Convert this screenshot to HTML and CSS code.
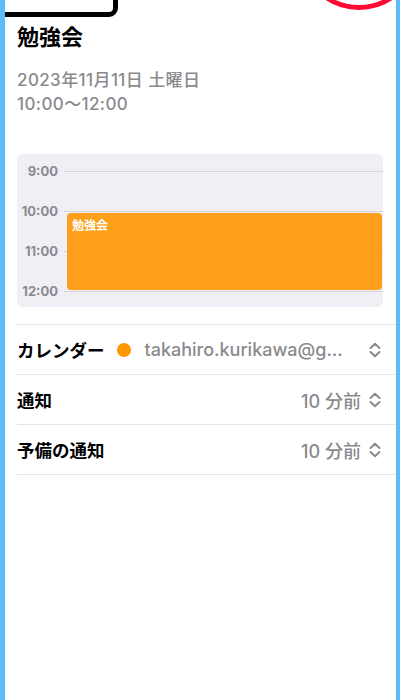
FILE: index.html
```html
<!DOCTYPE html>
<html lang="ja">
<head>
  <meta charset="UTF-8" />
  <meta name="viewport" content="width=device-width, initial-scale=1.0"/>
  <title>勉強会</title>
  <link rel="stylesheet" href="styles.css">
</head>
<body>
  <div class="screen">
    <div class="mark-box"></div>
    <div class="mark-circle"></div>

    <div class="content">
      <h1 class="title">勉強会</h1>
      <div class="when">
        <div>2023年11月11日 土曜日</div>
        <div>10:00〜12:00</div>
      </div>

      <div class="day">
        <div class="hour"><span class="hour-label">9:00</span><span class="hour-line"></span></div>
        <div class="hour"><span class="hour-label">10:00</span><span class="hour-line"></span></div>
        <div class="hour"><span class="hour-label">11:00</span><span class="hour-line"></span></div>
        <div class="hour"><span class="hour-label">12:00</span><span class="hour-line"></span></div>
        <div class="event">勉強会</div>
      </div>

      <div class="list">
        <div class="row">
          <span class="row-label">カレンダー</span>
          <span class="dot"></span>
          <span class="row-value grow">takahiro.kurikawa@g...</span>
          <svg class="updown" width="14" height="16" viewBox="0 0 14 16"><path d="M2.5 6 L7 1.8 L11.5 6 M2.5 10 L7 14.2 L11.5 10" fill="none" stroke="#8a8a8e" stroke-width="2" stroke-linecap="round" stroke-linejoin="round"/></svg>
        </div>
        <div class="row">
          <span class="row-label grow">通知</span>
          <span class="row-value">10 分前</span>
          <svg class="updown" width="14" height="16" viewBox="0 0 14 16"><path d="M2.5 6 L7 1.8 L11.5 6 M2.5 10 L7 14.2 L11.5 10" fill="none" stroke="#8a8a8e" stroke-width="2" stroke-linecap="round" stroke-linejoin="round"/></svg>
        </div>
        <div class="row">
          <span class="row-label grow">予備の通知</span>
          <span class="row-value">10 分前</span>
          <svg class="updown" width="14" height="16" viewBox="0 0 14 16"><path d="M2.5 6 L7 1.8 L11.5 6 M2.5 10 L7 14.2 L11.5 10" fill="none" stroke="#8a8a8e" stroke-width="2" stroke-linecap="round" stroke-linejoin="round"/></svg>
        </div>
      </div>
    </div>
  </div>
</body>
</html>
```

FILE: styles.css
```css
body {
  margin: 0;
  font-family: 'Inter', 'Noto Sans CJK JP', sans-serif;
  background: #fff;
}

.screen {
  position: relative;
  height: 700px;
  box-sizing: border-box;
  border-left: 5px solid #5bbdfc;
  border-right: 4px solid #5bbdfc;
  overflow: hidden;
}

.mark-box {
  position: absolute;
  left: -5px;
  top: -10px;
  width: 118px;
  height: 27px;
  box-sizing: border-box;
  border: 5px solid #000;
  border-radius: 0 0 9px 0;
}

.mark-circle {
  position: absolute;
  left: 294px;
  top: -110px;
  width: 120px;
  height: 120px;
  box-sizing: border-box;
  border: 5px solid #ff0a33;
  border-radius: 50%;
}

.content {
  padding: 24px 13px 0 12px;
}

.title {
  margin: 0;
  font-size: 22px;
  line-height: 26px;
  font-weight: 700;
  color: #000;
}

.when {
  margin-top: 18px;
  font-size: 17px;
  line-height: 24px;
  letter-spacing: 0.4px;
  font-weight: 500;
  color: #8a8a8e;
}

.day {
  position: relative;
  margin-top: 38px;
  padding: 7px 0 6px;
  background: #f0eff5;
  border-radius: 6px;
  display: flex;
  flex-direction: column;
  gap: 20px;
}

.hour {
  display: flex;
  align-items: center;
  height: 20px;
  gap: 6px;
}

.hour-label {
  width: 41px;
  text-align: right;
  font-size: 13px;
  font-weight: 700;
  color: #8a8a8e;
}

.hour-line {
  flex: 1;
  height: 1px;
  background: #d3d3d8;
}

.event {
  position: absolute;
  left: 50px;
  right: 1px;
  top: 59px;
  height: 77px;
  box-sizing: border-box;
  padding: 3px 5px;
  background: #fe9f1c;
  border-radius: 4px;
  color: #fff;
  font-size: 12px;
  font-weight: 700;
}

.list {
  margin-top: 17px;
  margin-right: -13px;
}

.row {
  display: flex;
  align-items: center;
  height: 49px;
  padding-right: 14px;
  border-top: 1px solid #e6e6ea;
}

.row:last-child {
  border-bottom: 1px solid #e6e6ea;
}

.row-label {
  font-size: 17.5px;
  font-weight: 700;
  color: #000;
}

.grow {
  flex: 1;
}

.dot {
  width: 14px;
  height: 14px;
  margin: 0 14px 0 12px;
  border-radius: 50%;
  background: #ff9500;
}

.row-value {
  font-size: 18px;
  font-weight: 500;
  color: #8a8a8e;
}

.updown {
  margin-left: 7px;
}
```
